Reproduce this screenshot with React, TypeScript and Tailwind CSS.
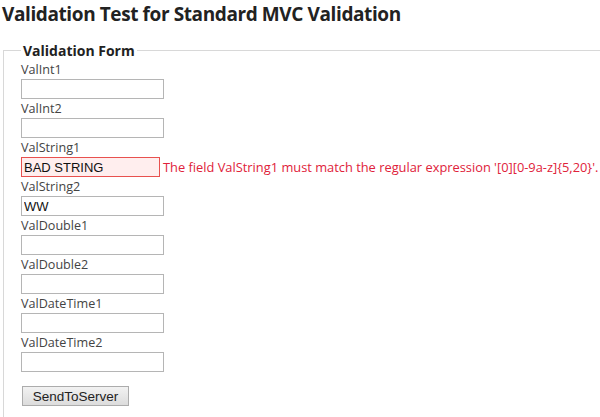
import React from 'react';

type Field = { name: string; value?: string; error?: string };

const fields: Field[] = [
  { name: 'ValInt1' },
  { name: 'ValInt2' },
  {
    name: 'ValString1',
    value: 'BAD STRING',
    error: "The field ValString1 must match the regular expression '[0][0-9a-z]{5,20}'.",
  },
  { name: 'ValString2', value: 'WW' },
  { name: 'ValDouble1' },
  { name: 'ValDouble2' },
  { name: 'ValDateTime1' },
  { name: 'ValDateTime2' },
];

const App: React.FC = () => {
  return (
    <div className="min-h-screen bg-white text-[#333] font-['Open_Sans',sans-serif] overflow-hidden">
      <h2 className="pl-[2px] pt-[1px] text-[19px] leading-[26px] font-bold text-[#222] tracking-[-0.4px]">
        Validation Test for Standard MVC Validation
      </h2>

      <fieldset className="ml-[3px] mt-[14px] w-[700px] border-t border-l border-[#d8d8d8] pl-[17px] pb-[20px]">
        <legend className="px-[2px] text-[14px] leading-[19px] font-bold text-[#222]">Validation Form</legend>

        <div className="flex flex-col pt-[1px]">
          {fields.map((f) => (
            <div key={f.name} className="flex flex-col">
              <label className="text-[12.6px] leading-[17px] h-[17px] text-[#444]">{f.name}</label>
              <div className="flex items-center mt-[1px] mb-[1px]">
                <input
                  readOnly
                  value={f.value ?? ''}
                  className={`h-[20px] px-[2px] text-[13px] font-['Liberation_Sans',Arial,sans-serif] text-[#111] border outline-none ${
                    f.error ? 'w-[139px] border-[#e8514f] bg-[#ffeeee]' : 'w-[143px] border-[#b5b5b5] bg-white'
                  }`}
                />
                {f.error && (
                  <span className="ml-[3px] text-[12.85px] leading-[17px] text-[#e0223a] whitespace-nowrap">
                    {f.error}
                  </span>
                )}
              </div>
            </div>
          ))}
        </div>

        <button className="mt-[13px] ml-[1px] w-[107px] h-[20px] border border-[#acacac] bg-gradient-to-b from-[#f2f2f2] to-[#dcdcdc] text-[13.5px] font-['Liberation_Sans',Arial,sans-serif] text-[#222]">
          SendToServer
        </button>
      </fieldset>
    </div>
  );
};

export default App;
